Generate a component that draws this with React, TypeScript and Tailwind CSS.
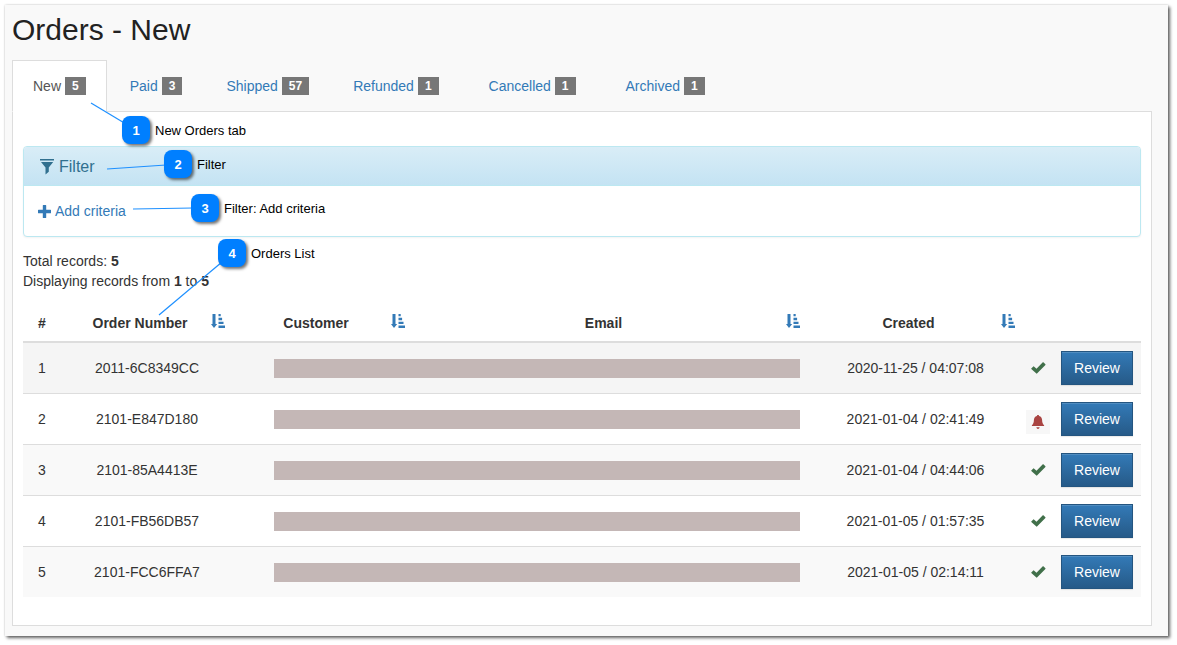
import { ReactNode } from "react";
import clsx from "clsx";

interface Order {
  number: string;
  created: string;
  seen: boolean;
}

const tabs = [
  { label: "New", count: 5, padding: "px-5" },
  { label: "Paid", count: 3, padding: "px-5" },
  { label: "Shipped", count: 57, padding: "px-5" },
  { label: "Refunded", count: 1, padding: "pl-5 pr-[26px]" },
  { label: "Cancelled", count: 1, padding: "pl-5 pr-[26px]" },
  { label: "Archived", count: 1, padding: "px-5" },
];

const orders: Order[] = [
  { number: "2011-6C8349CC", created: "2020-11-25 / 04:07:08", seen: true },
  { number: "2101-E847D180", created: "2021-01-04 / 02:41:49", seen: false },
  { number: "2101-85A4413E", created: "2021-01-04 / 04:44:06", seen: true },
  { number: "2101-FB56DB57", created: "2021-01-05 / 01:57:35", seen: true },
  { number: "2101-FCC6FFA7", created: "2021-01-05 / 02:14:11", seen: true },
];

// Callouts float over the page, each tied to its target by a line
const callouts = [
  { label: "New Orders tab", place: "left-[122px] top-[116px]", line: [91, 103, 126, 124] },
  { label: "Filter", place: "left-[164px] top-[150px]", line: [107, 169, 166, 165] },
  { label: "Filter: Add criteria", place: "left-[191px] top-[194px]", line: [133, 209, 193, 208] },
  { label: "Orders List", place: "left-[218px] top-[239px]", line: [159, 315, 222, 262] },
];

function SortIcon() {
  return (
    <svg viewBox="0 0 14 14" className="block h-3.5 w-3.5 fill-[#337ab7]" aria-hidden="true">
      <path d="M1.500 0h3v10H6.200L3 14 0 10h1.500zM7.500 0h2.200v2.300H7.500zM7.500 3.800h3.600v2.400H7.500zM7.500 7.700h5v2.400h-5zM7.500 11.500H14V14H7.500z" />
    </svg>
  );
}

function FilterIcon() {
  return (
    <svg viewBox="0 0 14 16" className="h-4 w-3.5 fill-[#31708f]" aria-hidden="true">
      <path d="M0 0h14v1.400H0zM1 3h12.200L8.800 8.500v4.300L5.500 15.500v-7z" />
    </svg>
  );
}

function PlusIcon() {
  return (
    <svg viewBox="0 0 13 13" className="h-[13px] w-[13px] fill-[#337ab7]" aria-hidden="true">
      <path d="M4.800.5q0-.5.5-.5h2.400q.5 0 .5.5v4.300h4.300q.5 0 .5.5v2.400q0 .5-.5.5H8.200v4.300q0 .5-.5.5H5.300q-.5 0-.5-.5V8.200H.5Q0 8.200 0 7.700V5.300q0-.5.5-.5h4.300z" />
    </svg>
  );
}

function CheckIcon() {
  return (
    <svg viewBox="0 0 15 12" className="h-3 w-[15px] fill-[#41704a]" role="img" aria-label="Seen">
      <path d="M0.300 6.500 2.300 4.500q.3-.3.6 0L5.500 6.700 11.800.3q.3-.3.600 0l2 2q.3.3 0 .6L6 11.500q-.3.3-.6 0L.3 7.100q-.3-.3 0-.6z" />
    </svg>
  );
}

function BellIcon() {
  return (
    <svg viewBox="0 0 14 14" className="h-3.5 w-3.5 fill-[#a94442]" role="img" aria-label="Unseen">
      <path d="M7 0c.8 0 1.100.5 1.100 1.100C10.200 1.600 11 3.300 11.100 5c.1 2.400.5 3.800 2 5.300V11H.9v-.7c1.500-1.500 1.900-2.900 2-5.300.1-1.700.9-3.400 3-3.900C5.900.5 6.200 0 7 0zM5.300 12.300h3.400Q8.300 14 7 14t-1.700-1.700z" />
    </svg>
  );
}

function SortableHead({ children }: { children: ReactNode }) {
  return (
    <th scope="col" className="p-2">
      <div className="flex items-center">
        <span className="flex-1">{children}</span>
        <button type="button" aria-label={`Sort by ${children}`} className="pb-1">
          <SortIcon />
        </button>
      </div>
    </th>
  );
}

function Tabs() {
  return (
    <ul className="flex border-b border-[#ddd]">
      {tabs.map((tab, i) => (
        <li key={tab.label} className="-mb-px mr-0.5">
          <a
            href="#"
            className={clsx(
              "flex items-center gap-1 border py-[15px]",
              tab.padding,
              i === 0
                ? "border-[#ddd] border-b-white bg-white text-[#555]"
                : "border-transparent text-[#337ab7]"
            )}
          >
            {tab.label}
            <span className="bg-[#777] px-[7px] py-[3px] text-xs leading-3 font-bold text-white">
              {tab.count}
            </span>
          </a>
        </li>
      ))}
    </ul>
  );
}

function FilterPanel() {
  return (
    <section className="rounded border border-[#bce8f1] bg-white shadow-xs">
      <h2 className="flex items-center gap-[5px] rounded-t-[3px] bg-linear-to-b from-[#d9edf7] to-[#c4e3f3] px-4 pt-2.5 pb-2 text-base leading-5 text-[#31708f]">
        <FilterIcon />
        Filter
      </h2>
      <div className="border-t border-[#bce8f1] px-3.5 py-[15px]">
        <a href="#" className="flex items-center gap-1 text-[#337ab7]">
          <PlusIcon />
          Add criteria
        </a>
      </div>
    </section>
  );
}

function OrdersTable() {
  return (
    <table className="mt-3.5 w-full table-fixed border-collapse text-center">
      <colgroup>
        <col className="w-[38px]" />
        <col className="w-[172px]" />
        <col className="w-[180px]" />
        <col />
        <col className="w-[215px]" />
        <col className="w-[30px]" />
        <col className="w-[88px]" />
      </colgroup>
      <thead>
        <tr className="border-b-2 border-[#ddd]">
          <th scope="col" className="p-2">#</th>
          <SortableHead>Order Number</SortableHead>
          <SortableHead>Customer</SortableHead>
          <SortableHead>Email</SortableHead>
          <SortableHead>Created</SortableHead>
          <td colSpan={2} />
        </tr>
      </thead>
      <tbody>
        {orders.map((order, i) => (
          <tr
            key={order.number}
            className={clsx(
              "border-t border-[#ddd]",
              i === 0 ? "bg-[#f5f5f5]" : "odd:bg-[#f9f9f9]"
            )}
          >
            <td className="p-2">{i + 1}</td>
            <td className="p-2">{order.number}</td>
            <td colSpan={2} className="py-2 pr-2 pl-[41px]">
              <div className="h-[19px] bg-[#c4b7b6]" />
            </td>
            <td className="p-2">{order.created}</td>
            <td>
              {order.seen ? (
                <span className="flex justify-center">
                  <CheckIcon />
                </span>
              ) : (
                <span className="mx-auto mt-1.5 flex h-6 w-6 items-center justify-center bg-[#f7f7f7]">
                  <BellIcon />
                </span>
              )}
            </td>
            <td className="p-2">
              <button
                type="button"
                className="block w-full border border-[#245580] bg-linear-to-b from-[#337ab7] to-[#265a88] py-1.5 text-white shadow-[inset_0_1px_0_rgba(255,255,255,0.15),0_1px_1px_rgba(0,0,0,0.08)]"
              >
                Review
              </button>
            </td>
          </tr>
        ))}
      </tbody>
    </table>
  );
}

function Callouts() {
  return (
    <div className="pointer-events-none absolute inset-0 text-[13px] leading-[30px] text-black">
      <svg className="absolute inset-0 h-full w-full stroke-[#1e90ff]" aria-hidden="true">
        {callouts.map(({ label, line: [x1, y1, x2, y2] }) => (
          <line key={label} x1={x1} y1={y1} x2={x2} y2={y2} strokeWidth="1.2" />
        ))}
      </svg>
      {callouts.map((callout, i) => (
        <div key={callout.label} className={clsx("absolute flex gap-[5px]", callout.place)}>
          <span className="h-7 w-7 rounded-lg bg-[#007fff] text-center font-bold text-white shadow-[2px_2px_3px_rgba(0,0,0,0.55)]">
            {i + 1}
          </span>
          <span className="whitespace-nowrap">{callout.label}</span>
        </div>
      ))}
    </div>
  );
}

export default function App() {
  return (
    <div className="relative bg-white pt-[5px] pr-[9px] pb-[9px] pl-[5px] font-['Liberation_Sans',Arial,sans-serif] text-sm text-[#333]">
      <main className="bg-[#f9f9f9] pt-2 pr-4 pb-2.5 pl-[7px] shadow-[2px_2px_3px_rgba(0,0,0,0.6),0_0_2px_rgba(0,0,0,0.2)]">
        <h1 className="mb-3.5 text-3xl leading-[33px] text-[#222]">Orders - New</h1>
        <Tabs />
        <div className="border border-t-0 border-[#ddd] bg-white px-2.5 pt-[34px] pb-7">
          <FilterPanel />
          <div className="mt-3.5">
            <p>
              Total records: <b>5</b>
            </p>
            <p>
              Displaying records from <b>1</b> to <b>5</b>
            </p>
          </div>
          <OrdersTable />
        </div>
      </main>
      <Callouts />
    </div>
  );
}
